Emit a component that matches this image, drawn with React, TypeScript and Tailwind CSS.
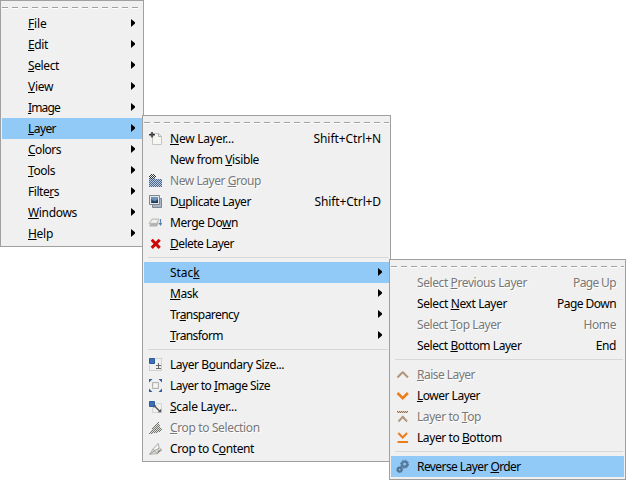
import { useLayoutEffect, useRef, useState, type ReactNode } from "react";

type Item = {
  label: string;
  /** index of the mnemonic letter */
  key: number;
  /** printed width of the label */
  w: number;
  shortcut?: string;
  sw?: number;
  icon?: ReactNode;
  sub?: boolean;
  disabled?: boolean;
  active?: boolean;
};
type Entry = Item | "-";

/** A run of text whose tracking is adjusted so that it takes up the given width. */
function Fit({ width, chars, children }: { width: number; chars: number; children: ReactNode }) {
  const ref = useRef<HTMLSpanElement>(null);
  const [spacing, setSpacing] = useState(0);
  useLayoutEffect(() => {
    if (ref.current) {
      setSpacing((width - ref.current.getBoundingClientRect().width) / chars);
    }
  }, [width, chars]);
  return (
    <span ref={ref} className="whitespace-pre" style={{ letterSpacing: spacing }}>
      {children}
    </span>
  );
}

function Svg({ children }: { children: ReactNode }) {
  return (
    <svg width="16" height="16" viewBox="0 0 16 16" fill="none" className="block">
      {children}
    </svg>
  );
}

/** Checkerboard of single pixels; each row is [y, x0, x1]. */
function Stipple({ rows, color }: { rows: [number, number, number][]; color: string }) {
  const cells = rows.flatMap(([y, x0, x1]) =>
    Array.from({ length: x1 - x0 }, (_, i) => x0 + i)
      .filter((x) => (x + y) % 2 === 0)
      .map((x) => `M${x} ${y}h1v1h-1z`),
  );
  return <path d={cells.join("")} fill={color} />;
}

const NewLayer = (
  <Svg>
    <path d="M4.5 2.5H10.5L13.5 5.5v8h-9z" fill="#f6f6f5" stroke="#c4c4c0" />
    <path d="M10.5 2.5v3h3" stroke="#b2b2ae" />
    <path d="M4 1v5.6M1.2 3.8h5.6" stroke="#222" strokeWidth="1.4" />
    <path d="M2.5 2.3l3 3M5.5 2.3l-3 3" stroke="#666" strokeWidth=".6" />
  </Svg>
);
const Group = (
  <Svg>
    <path d="M1 5h6l1 1h6v8H1z" fill="#b9c8dc" />
    <Stipple
      color="#49678f"
      rows={[[5, 1, 7], [6, 1, 14], [7, 1, 14], [8, 1, 14], [9, 1, 14], [10, 1, 14], [11, 1, 14], [12, 1, 14], [13, 1, 14]]}
    />
    <Stipple color="#333" rows={[[1, 3, 6], [2, 2, 7], [3, 1, 8], [4, 2, 7], [5, 3, 6]]} />
  </Svg>
);
const Duplicate = (
  <Svg>
    <path d="M4.5 4.5h9v9h-9z" fill="#a9b6c4" stroke="#7c8793" />
    <path d="M1.5 1.5h10v9h-10z" fill="#e5e9ec" stroke="#7d8790" />
    <path d="M3 3h7v6H3z" fill="#3d5f87" />
    <path d="M3 3h7v2L7 7 3 5z" fill="#6f92b8" />
    <path d="M3 9l2-2 2 1 3-2v3z" fill="#1f3650" />
  </Svg>
);
const Merge = (
  <Svg>
    <path d="M1 10.5l3-3h7l-2 4H2z" fill="#b2b2b0" />
    <path d="M1 8.5l3-4.5h7L9 8.5z" fill="#deddda" stroke="#b4b3b0" strokeWidth=".8" />
    <path d="M3 7.5L5 5h4L8 7.5z" fill="#f2f2f0" />
    <path d="M12.5 4v6" stroke="#5b82ad" strokeWidth="1.2" />
    <path d="M10.7 8h3.6l-1.8 3z" fill="#5b82ad" />
  </Svg>
);
const Delete = (
  <Svg>
    <path d="M3.7 3.7l8 8.2M11.7 3.7l-8 8.2" stroke="#cc0707" strokeWidth="3" />
  </Svg>
);
const Boundary = (
  <Svg>
    <path d="M7.5 1.5h6v12h-12v-6" stroke="#b0b0b0" strokeDasharray="1 1" />
    <path d="M1.5 1.5h5v5h-5z" fill="#3d6fb8" stroke="#2d5c9e" />
    <path d="M10.5 6v5M8 8.5h5M8 11.5h5" stroke="#666" />
  </Svg>
);
const ToImage = (
  <Svg>
    <path d="M4.5 4.5h6v6h-6z" fill="#e8e8e6" stroke="#b3b3b0" />
    <path d="M6 6h3v3H6z" fill="#f6f6f5" />
    <path d="M1 4.5V1h3.5zM10.5 1H14v3.5zM14 10.5V14h-3.5zM4.5 14H1v-3.5z" fill="#2d5c9e" />
  </Svg>
);
const Scale = (
  <Svg>
    <path d="M8.5 4.5h5v9h-9v-5" stroke="#bbb" strokeDasharray="1 1" />
    <path d="M1.5 2.5h5v5h-5z" fill="#3d6fb8" stroke="#2d5c9e" />
    <path d="M6.5 7l5 5" stroke="#555" strokeWidth="1.2" />
    <path d="M13.2 13.2h-3.4l3.4-3.4z" fill="#555" />
    <path d="M5.5 6.2h3L5.5 9.2z" fill="#555" />
  </Svg>
);
const Crop = (
  <Svg>
    <path d="M1.5 13.3L5 7.8l5.2-5.5 1 4.4 2.6 2-4.3 4z" fill="#d9d9d6" stroke="#a2a29f" strokeWidth=".7" />
    <path d="M6 8.3l3.7-4 .6 3.2-3 2.2z" fill="#f8f8f6" />
    <path d="M1.8 13.3l5-3.8 4.2-2.2" stroke="#8b8b88" strokeWidth=".8" />
    <path d="M5 8l3.8 4.5M10.3 9.8l3-.8-3.8 3.4z" fill="#888" stroke="#888" strokeWidth=".6" />
  </Svg>
);
const CropOff = (
  <Svg>
    <path d="M1 14l4-7 5-5 1 4 3 3-4.5 4z" fill="#deded9" />
    <Stipple
      color="#747472"
      rows={[[2, 9, 11], [3, 8, 11], [4, 7, 11], [5, 6, 12], [6, 5, 12], [7, 5, 13], [8, 4, 14], [9, 4, 14], [10, 3, 13], [11, 3, 12], [12, 2, 10], [13, 1, 5]]}
    />
  </Svg>
);
const Raise = (
  <Svg>
    <path d="M2.5 10.3L7.7 5l5.2 5.3" stroke="#96714f" strokeWidth="1.9" />
    <path d="M2.5 10.3L7.7 5l5.2 5.3" stroke="#d8c5b4" strokeWidth="1.9" strokeDasharray=".5 .9" />
  </Svg>
);
const Lower = (
  <Svg>
    <path d="M2.5 5l5.2 5.2L12.9 5" stroke="#ed7d1a" strokeWidth="2.6" />
  </Svg>
);
const ToTop = (
  <Svg>
    <path d="M3.5 12.3l4.3-4.5 4.2 4.5" stroke="#96714f" strokeWidth="1.8" />
    <path d="M3.5 12.3l4.3-4.5 4.2 4.5" stroke="#d8c5b4" strokeWidth="1.8" strokeDasharray=".5 .9" />
    <path d="M2 2h11v2H2z" fill="#d8c5b4" />
    <Stipple color="#96714f" rows={[[2, 2, 13], [3, 2, 13]]} />
  </Svg>
);
const ToBottom = (
  <Svg>
    <path d="M3.3 3l4.4 4.5L12.1 3" stroke="#ed7d1a" strokeWidth="2.1" />
    <path d="M2.5 12H13" stroke="#ed7d1a" strokeWidth="2" />
  </Svg>
);
const Gears = (
  <Svg>
    <circle cx="9.6" cy="5.2" r="2.6" stroke="#57799b" strokeWidth="2.4" />
    <circle cx="9.6" cy="5.2" r="4" stroke="#57799b" strokeWidth="1" strokeDasharray="1.6 1.5" />
    <circle cx="4.7" cy="10.6" r="1.9" stroke="#527393" strokeWidth="2" />
    <circle cx="4.7" cy="10.6" r="3" stroke="#527393" strokeDasharray="1.2 1.1" />
  </Svg>
);

const mainMenu: Entry[] = [
  { label: "File", key: 0, w: 18.5, sub: true },
  { label: "Edit", key: 0, w: 20, sub: true },
  { label: "Select", key: 0, w: 31, sub: true },
  { label: "View", key: 0, w: 25, sub: true },
  { label: "Image", key: 0, w: 32, sub: true },
  { label: "Layer", key: 0, w: 28, sub: true, active: true },
  { label: "Colors", key: 0, w: 33, sub: true },
  { label: "Tools", key: 0, w: 27, sub: true },
  { label: "Filters", key: 5, w: 31, sub: true },
  { label: "Windows", key: 0, w: 49, sub: true },
  { label: "Help", key: 0, w: 25, sub: true },
];

const layerMenu: Entry[] = [
  { label: "New Layer...", key: 0, w: 64, shortcut: "Shift+Ctrl+N", sw: 67.5, icon: NewLayer },
  { label: "New from Visible", key: 9, w: 89 },
  { label: "New Layer Group", key: 10, w: 91, icon: Group, disabled: true },
  { label: "Duplicate Layer", key: 1, w: 81, shortcut: "Shift+Ctrl+D", sw: 66.5, icon: Duplicate },
  { label: "Merge Down", key: 8, w: 68, icon: Merge },
  { label: "Delete Layer", key: 0, w: 64, icon: Delete },
  "-",
  { label: "Stack", key: 4, w: 29.5, sub: true, active: true },
  { label: "Mask", key: 0, w: 28, sub: true },
  { label: "Transparency", key: 2, w: 68.7, sub: true },
  { label: "Transform", key: 0, w: 53, sub: true },
  "-",
  { label: "Layer Boundary Size...", key: 7, w: 114, icon: Boundary },
  { label: "Layer to Image Size", key: 9, w: 100, icon: ToImage },
  { label: "Scale Layer...", key: 0, w: 67, icon: Scale },
  { label: "Crop to Selection", key: 0, w: 89.7, icon: CropOff, disabled: true },
  { label: "Crop to Content", key: 9, w: 84, icon: Crop },
];

const stackMenu: Entry[] = [
  { label: "Select Previous Layer", key: 7, w: 110, shortcut: "Page Up", sw: 43, disabled: true },
  { label: "Select Next Layer", key: 7, w: 90, shortcut: "Page Down", sw: 59 },
  { label: "Select Top Layer", key: 7, w: 84, shortcut: "Home", sw: 32.5, disabled: true },
  { label: "Select Bottom Layer", key: 7, w: 104.5, shortcut: "End", sw: 20.3 },
  "-",
  { label: "Raise Layer", key: 0, w: 58, icon: Raise, disabled: true },
  { label: "Lower Layer", key: 0, w: 63, icon: Lower },
  { label: "Layer to Top", key: 9, w: 64, icon: ToTop, disabled: true },
  { label: "Layer to Bottom", key: 9, w: 84.7, icon: ToBottom },
  "-",
  { label: "Reverse Layer Order", key: 14, w: 103.7, icon: Gears, active: true },
];

function Row({ item }: { item: Item }) {
  const { label, key: k, disabled } = item;
  const tone = disabled ? "text-[#787878] [text-shadow:1px_1px_0_#fff]" : "text-black";
  return (
    <div className={`flex h-[21px] pl-1 ${item.active ? "bg-[#91c9f7]" : ""} ${tone}`}>
      <div className="mt-[3px] mr-[5px] h-4 w-4">{item.icon}</div>
      <div className="h-[21px] flex-1 pl-px leading-[22px]">
        <Fit width={item.w} chars={label.length}>
          {label.slice(0, k)}
          <span className="underline decoration-1 underline-offset-[1px] [text-decoration-skip-ink:none]">{label[k]}</span>
          {label.slice(k + 1)}
        </Fit>
      </div>
      {item.shortcut && (
        <div className="h-[21px] pr-2 leading-[22px]">
          <Fit width={item.sw ?? 0} chars={item.shortcut.length}>{item.shortcut}</Fit>
        </div>
      )}
      {item.sub && (
        <svg width="4" height="8" viewBox="0 0 4 8" className="mt-[6px] mr-[7px]">
          <path d="M0 0L4 3.3v1.2L0 8z" fill="#000" />
        </svg>
      )}
    </div>
  );
}

function Menu({ entries, className }: { entries: Entry[]; className: string }) {
  return (
    <div className={`absolute border border-[#a0a0a0] bg-[#f0f0f0] px-px pb-[2px] ${className}`}>
      <div className="flex h-3 flex-col pt-[6px]">
        <div className="h-px bg-[repeating-linear-gradient(90deg,#a0a0a0_0_6px,transparent_6px_10px)]" />
        <div className="h-px bg-[repeating-linear-gradient(90deg,#fff_0_6px,transparent_6px_10px)]" />
      </div>
      {entries.map((e, i) =>
        e === "-" ? (
          <div key={i} className="flex h-2 items-start pt-[3px] pr-px pl-1">
            <div className="h-px flex-1 bg-[#d7d7d7]" />
          </div>
        ) : (
          <Row key={i} item={e} />
        ),
      )}
    </div>
  );
}

export default function App() {
  return (
    <div className="relative h-[480px] w-[626px] overflow-hidden bg-white font-['Noto_Sans','Open_Sans',sans-serif] text-[12px]">
      <Menu entries={mainMenu} className="top-0 left-0 w-[144px]" />
      <Menu entries={layerMenu} className="top-[115px] left-[142px] w-[249px]" />
      <Menu entries={stackMenu} className="top-[259px] left-[389px] w-[237px]" />
    </div>
  );
}
